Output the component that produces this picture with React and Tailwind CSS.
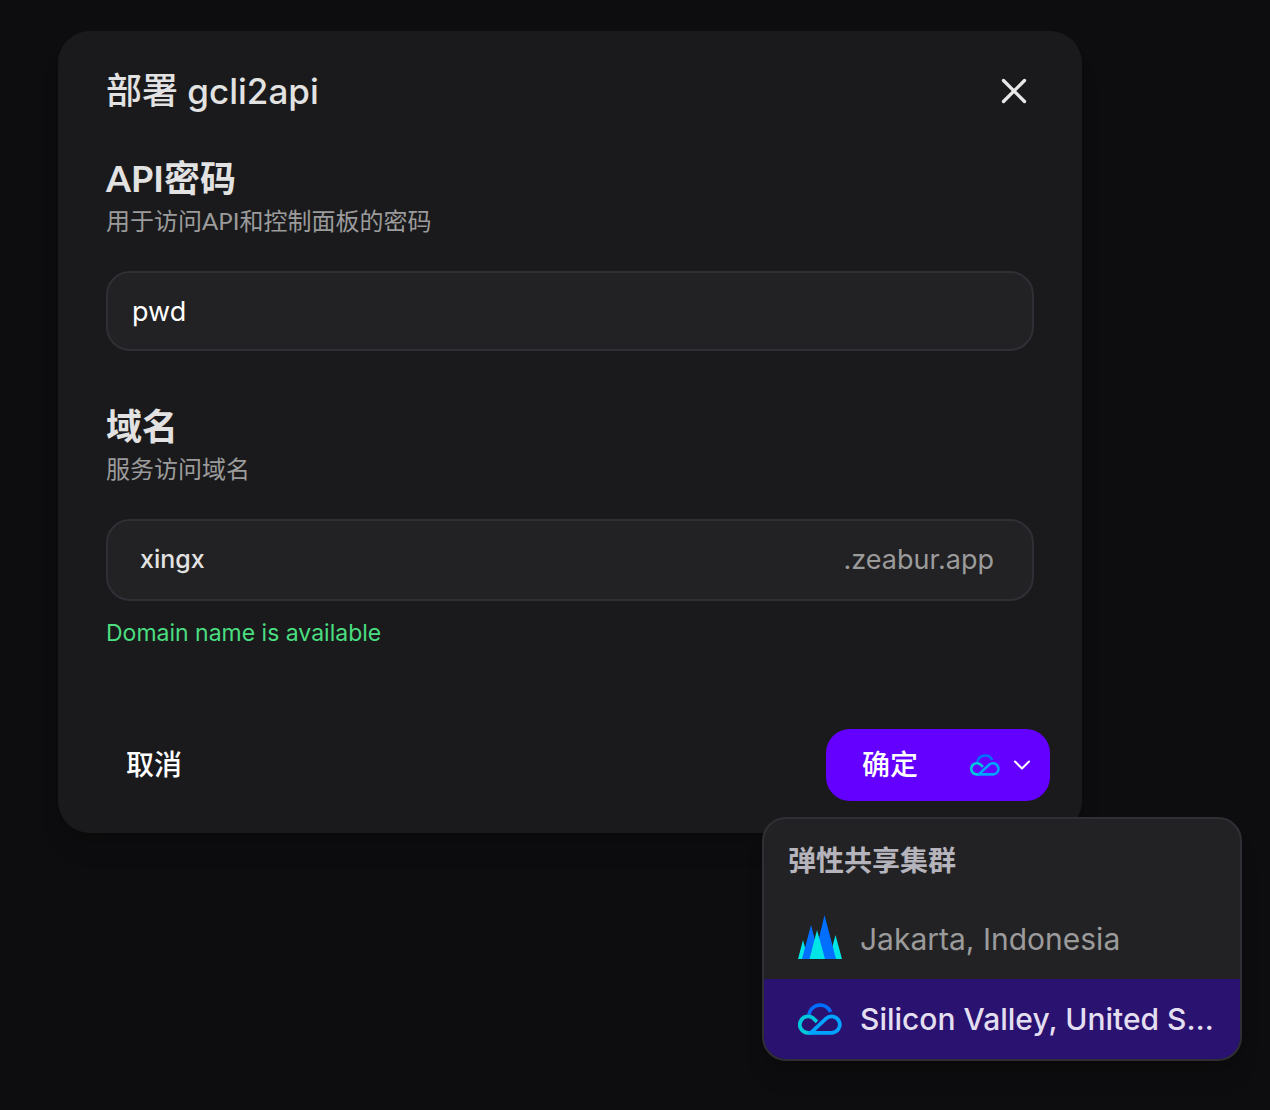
import React, { useState } from "react";
import { X, ChevronDown } from "lucide-react";

function CloudMark({ className }) {
  return (
    <svg viewBox="0 0 44 32" className={className} fill="none" strokeWidth="3.8" aria-hidden="true">
      <path d="M10.9 11.6A11.4 11.4 0 0 1 32.6 9" stroke="#006eff" />
      <path d="M19 18.8L16.4 16.4A8.2 8.2 0 1 0 10 29.8H14" stroke="#00c8dc" />
      <path d="M10.5 29.8H33.8A8.2 8.2 0 1 0 28 15.6L13 29.6" stroke="#00a3ff" />
    </svg>
  );
}

function PeaksMark({ className }) {
  return (
    <svg viewBox="0 0 44 48" className={className} aria-hidden="true">
      <path d="M0 44L5 25L10 44ZM31 44L37.5 20L44 44Z" fill="#00e5e5" />
      <path d="M4 44L13 10L22 44ZM16 44L26.5 0L38 44Z" fill="#006eff" />
      <path d="M11.5 44L19 15L27 44Z" fill="#00e5e5" />
    </svg>
  );
}

const regions = [
  { id: "jakarta", name: "Jakarta, Indonesia", Icon: PeaksMark },
  { id: "silicon-valley", name: "Silicon Valley, United S…", Icon: CloudMark },
];

function Field({ id, title, description, children }) {
  return (
    <section>
      <label htmlFor={id} className="block font-['Lato','Noto_Sans_CJK_SC',sans-serif] text-[36px] leading-[38px] font-bold text-[#e2e2e2]">
        {title}
      </label>
      <p className="mt-1 mb-[30px] font-['Lato','Noto_Sans_CJK_SC',sans-serif] text-2xl leading-10 text-[#9b9b9b]">
        {description}
      </p>
      {children}
    </section>
  );
}

export default function App() {
  const [password, setPassword] = useState("pwd");
  const [domain, setDomain] = useState("xingx");
  const [region, setRegion] = useState("silicon-valley");

  return (
    <main className="min-h-screen bg-[#0d0d0f] pt-[31px] pr-7 pl-[58px] font-['Inter','Noto_Sans_CJK_SC',sans-serif]">
      <div
        role="dialog"
        aria-labelledby="dialog-title"
        className="w-full max-w-[1024px] rounded-[32px] bg-[#1a1a1c] px-12 pt-10 pb-8 shadow-xl"
      >
        <header className="mb-12 flex h-10 items-center justify-between">
          <h1 id="dialog-title" className="text-[36px] leading-10 font-medium text-[#e2e2e2]">
            部署<span className="text-[35px]"> gcli2api</span>
          </h1>
          <button type="button" aria-label="关闭" className="flex size-10 items-center justify-center text-[#e8e8e8]">
            <X size={42} strokeWidth={1.9} className="shrink-0" />
          </button>
        </header>

        <div className="flex flex-col gap-14">
          <Field id="password" title="API密码" description="用于访问API和控制面板的密码">
            <input
              id="password"
              value={password}
              onChange={(e) => setPassword(e.target.value)}
              className="h-20 w-full rounded-3xl border-2 border-[#302f36] bg-[#222224] px-6 text-[27px] text-white outline-none"
            />
          </Field>

          <Field id="domain" title="域名" description="服务访问域名">
            <div className="flex h-[82px] items-center rounded-3xl border-2 border-[#302f36] bg-[#222224] pr-[38px] pl-8 text-[27px]">
              <input
                id="domain"
                value={domain}
                onChange={(e) => setDomain(e.target.value)}
                className="min-w-0 flex-1 bg-transparent text-[25px] font-medium text-[#e2e2e2] outline-none"
              />
              <span className="text-[#9b9b9b]">.zeabur.app</span>
            </div>
            <p className="mt-4 text-[23px] leading-8 text-[#4ade80]">Domain name is available</p>
          </Field>
        </div>

        <footer className="mt-20 -mr-4 flex items-center justify-between">
          <button type="button" className="h-[72px] px-5 text-[28px] font-medium text-white">
            取消
          </button>
          <div className="relative flex h-[72px] rounded-3xl bg-[#6300ff] text-white">
            <button type="button" className="pr-8 pl-9 text-[28px] font-medium">
              确定
            </button>
            <button
              type="button"
              aria-label="选择区域"
              aria-haspopup="listbox"
              aria-expanded="true"
              className="flex items-center gap-2 pr-3.5 pl-5"
            >
              <CloudMark className="h-[22px] w-[30px]" />
              <ChevronDown size={28} strokeWidth={1.8} />
            </button>

            <div className="absolute top-full -right-48 mt-4 w-[480px] overflow-hidden rounded-3xl border-2 border-[#302f36] bg-[#222224] shadow-xl">
              <h2 className="flex h-20 items-center px-6 pt-1 text-[28px] font-bold text-[#b5b3bb]">弹性共享集群</h2>
              <ul role="listbox" aria-label="弹性共享集群">
                {regions.map(({ id, name, Icon }) => (
                  <li key={id} role="option" aria-selected={region === id}>
                    <button
                      type="button"
                      onClick={() => setRegion(id)}
                      className={
                        region === id
                          ? "flex h-20 w-full items-center gap-[18px] bg-[#2a1271] pr-4 pl-[34px] text-left text-[30px] font-medium text-[#e3dff0]"
                          : "flex h-20 w-full items-center gap-[18px] pr-4 pl-[34px] text-left text-[30px] text-[#9b9b9b]"
                      }
                    >
                      <Icon className="w-11 shrink-0" />
                      <span className="truncate">{name}</span>
                    </button>
                  </li>
                ))}
              </ul>
            </div>
          </div>
        </footer>
      </div>
    </main>
  );
}
